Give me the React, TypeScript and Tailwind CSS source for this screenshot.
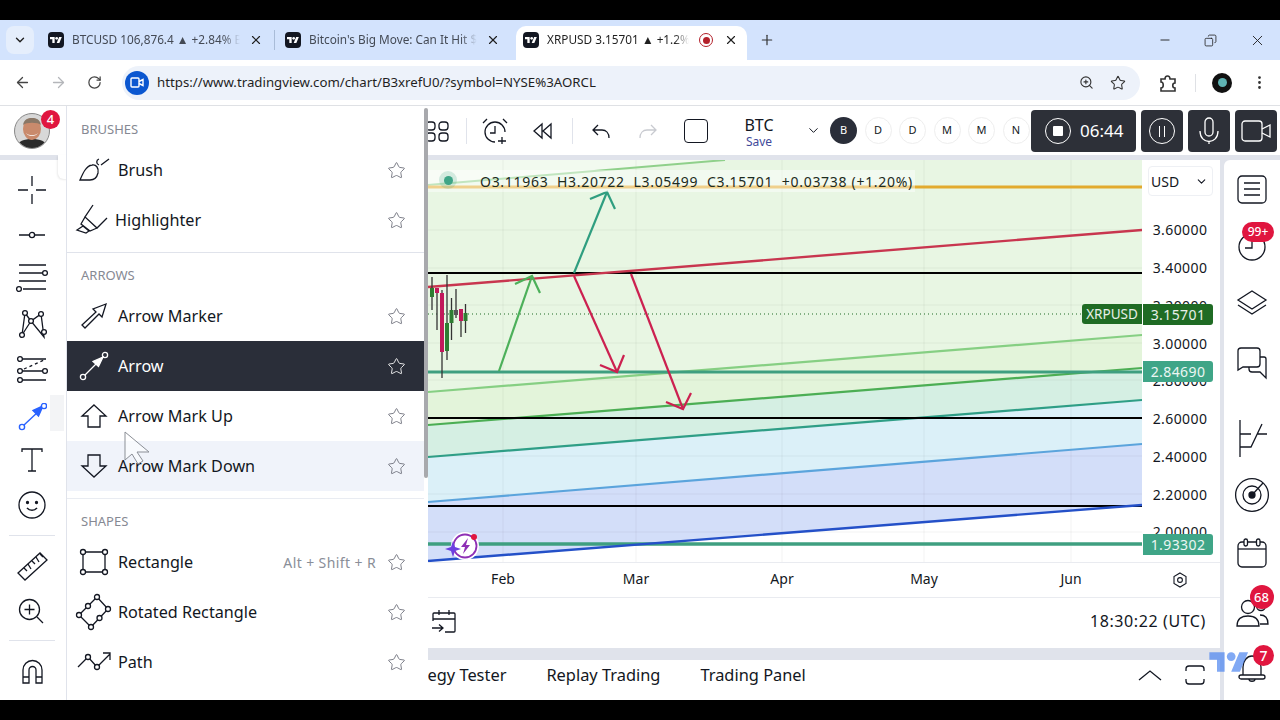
import { ArrowLeft, ArrowRight, ChevronDown, Copy, Minus, MoreVertical, Plus, RotateCw, Star, X, ZoomIn } from "lucide-react";
import type { ReactNode } from "react";

const INK = "#131722";

function TvMark({ color = "#fff" }: { color?: string }) {
  return (
    <svg viewBox="0 2 36 22" className="h-full w-full" fill={color}>
      <path d="M14 22H7V11H0V4h14v18zM28 22h-8l7.5-18h8L28 22z" />
      <circle cx="20" cy="8" r="4" />
    </svg>
  );
}

function Favicon() {
  return (
    <div className="flex size-4 shrink-0 items-center justify-center rounded-[4px] bg-[#131722] p-[2px]">
      <TvMark />
    </div>
  );
}

function Ico({ w, h, className, children }: { w: number; h: number; className?: string; children: ReactNode }) {
  return (
    <svg
      width={w}
      height={h}
      viewBox={`0 0 ${w} ${h}`}
      fill="none"
      stroke={INK}
      strokeWidth="1.3"
      className={className}
      style={{ overflow: "visible" }}
    >
      {children}
    </svg>
  );
}

function Badge({ children, className }: { children: ReactNode; className: string }) {
  return (
    <span
      className={`absolute flex items-center justify-center rounded-full bg-[#e0163f] text-[13px] font-medium leading-none text-white ${className}`}
    >
      {children}
    </span>
  );
}

/* left tools */
const leftTools: { h: number; mt: number; icon: ReactNode }[] = [
  {
    h: 28,
    mt: 16,
    icon: (
      <Ico w={28} h={28}>
        <path d="M14 0v10M14 18v10M0 14h10M18 14h10" />
      </Ico>
    ),
  },
  {
    h: 10,
    mt: 26,
    icon: (
      <Ico w={28} h={10}>
        <path d="M1 5h10M17 5h10" />
        <circle cx="14" cy="5" r="2.6" />
      </Ico>
    ),
  },
  {
    h: 28,
    mt: 24,
    icon: (
      <Ico w={32} h={28}>
        <path d="M3 1h27M3 9h23M3 17h27M7 25h23" />
        <circle cx="29" cy="9" r="2.4" />
        <circle cx="3" cy="25" r="2.4" />
      </Ico>
    ),
  },
  {
    h: 30,
    mt: 16,
    icon: (
      <Ico w={32} h={30}>
        <path d="M6 27L9 5l6 8 10-7 3 23-13-16z" />
        <circle cx="9" cy="5" r="2.4" fill="#fff" />
        <circle cx="25" cy="6" r="2.4" fill="#fff" />
        <circle cx="15" cy="13" r="2.4" fill="#fff" />
        <circle cx="6" cy="27" r="2.4" fill="#fff" />
        <circle cx="28" cy="24" r="2.4" fill="#fff" />
      </Ico>
    ),
  },
  {
    h: 26,
    mt: 19,
    icon: (
      <Ico w={32} h={26}>
        <path d="M7 2h23M7 14h19M7 23h23" />
        <path d="M8 12L28 3" strokeDasharray="3 3" />
        <circle cx="4" cy="2" r="2.4" />
        <circle cx="4" cy="14" r="2.4" />
        <circle cx="29" cy="14" r="2.4" />
        <circle cx="4" cy="23" r="2.4" />
      </Ico>
    ),
  },
];

function LeftToolbar() {
  return (
    <div className="flex w-[66px] shrink-0 flex-col items-center bg-white pr-[2px]">
      {leftTools.map((t, i) => (
        <div key={i} className="flex w-full justify-center" style={{ marginTop: t.mt, height: t.h }}>
          {t.icon}
        </div>
      ))}
      <div className="relative mt-[12px] flex h-[44px] w-full items-center justify-center">
        <div className="absolute right-0 top-0 h-[36px] w-[14px] bg-[#f3f4f6]" />
        <svg width="30" height="28" viewBox="0 0 30 28" fill="none" stroke="#2962ff" strokeWidth="1.4" className="relative">
          <path d="M7 22L22 8" />
          <path d="M26 3l-10 4.5 5.5 5.500z" fill="#2962ff" />
          <circle cx="5" cy="24" r="2.6" />
          <circle cx="27" cy="3" r="2.6" fill="#fff" />
        </svg>
      </div>
      <div className="mt-[8px] flex h-[26px] w-full justify-center">
        <Ico w={22} h={26}>
          <path d="M1 5V2h20v3M11 2v22M7 24h8" />
        </Ico>
      </div>
      <div className="mt-[18px] flex w-full justify-center">
        <Ico w={28} h={28}>
          <circle cx="14" cy="14" r="13" />
          <circle cx="9.5" cy="11.5" r="1" fill={INK} />
          <circle cx="18.5" cy="11.5" r="1" fill={INK} />
          <path d="M9 17c2.5 3 7.5 3 10 0" />
        </Ico>
      </div>
      <div className="mt-[16px] h-px w-[46px] bg-[#e0e3eb]" />
      <div className="mt-[14px] flex w-full justify-center">
        <Ico w={32} h={32}>
          <path d="M2 23L24 3l7 7-22 20z" />
          <path d="M8 18l3 3M12 14l3 5M16 11l3 3M20 7l3 5M24 4l3 3" />
        </Ico>
      </div>
      <div className="mt-[17px] flex w-full justify-center">
        <Ico w={26} h={26}>
          <circle cx="10.500" cy="10.500" r="10" />
          <path d="M10.500 5.500v10M5.500 10.500h10M18 18l6 6" />
        </Ico>
      </div>
      <div className="mt-[15px] h-px w-[46px] bg-[#e0e3eb]" />
      <div className="mt-[19px] flex w-full justify-center">
        <Ico w={21} h={24}>
          <path d="M1 23V10a9.500 9.500 0 0 1 19 0v13h-6V10a3.500 3.500 0 0 0-7 0v13z" />
          <path d="M1 17h6M14 17h6" />
        </Ico>
      </div>
    </div>
  );
}

/* menu */
const menuIcons: Record<string, ReactNode> = {
  Brush: (
    <>
      <path d="M4 27C7 20 10 13 16 12c4-1 7 3 6 8-1 4-4 7-8 7H4z" />
      <path d="M23 6c-3 1-3 5 0 6M25 12l8-6" />
    </>
  ),
  Highlighter: (
    <>
      <path d="M17 2L9 14l12 11 10-10" />
      <path d="M9 14l-4 7 9 7 7-3M1 27l6-4 6 5-3 2z" />
    </>
  ),
  "Arrow Marker": <path d="M6 26l14-13-3-3 13-5-4 13-3-3L9 29z" />,
  "Arrow Mark Up": <path d="M18 6l12 11h-6v11H12V17H6z" />,
  "Arrow Mark Down": <path d="M12 6h12v11h6L18 28 6 17h6z" />,
  Rectangle: (
    <>
      <path d="M7 7h22v20H7z" />
      <circle cx="7" cy="7" r="2.5" fill="#fff" />
      <circle cx="29" cy="7" r="2.5" fill="#fff" />
      <circle cx="7" cy="27" r="2.5" fill="#fff" />
      <circle cx="29" cy="27" r="2.5" fill="#fff" />
    </>
  ),
  "Rotated Rectangle": (
    <>
      <path d="M21 2l11 12-17 18L3 20z" />
      <circle cx="21" cy="2" r="2.5" fill="#fff" />
      <circle cx="32" cy="14" r="2.5" fill="#fff" />
      <circle cx="15" cy="32" r="2.5" fill="#fff" />
      <circle cx="3" cy="20" r="2.5" fill="#fff" />
      <circle cx="12" cy="11" r="2.5" fill="#fff" />
      <circle cx="23.5" cy="23" r="2.5" fill="#fff" />
    </>
  ),
  Path: (
    <>
      <path d="M2 22l10-10 9 10L34 9M27 8h7v7" />
      <circle cx="12" cy="12" r="2.5" fill="#fff" />
      <circle cx="21" cy="22" r="2.5" fill="#fff" />
    </>
  ),
};

function MenuItem({
  label,
  shortcut,
  active,
  hovered,
  textShift,
}: {
  label: string;
  shortcut?: string;
  active?: boolean;
  hovered?: boolean;
  textShift?: boolean;
}) {
  return (
    <div
      className={`flex h-[50px] w-[357px] items-center pr-[18px] ${
        active ? "bg-[#2a2e39] text-white" : hovered ? "bg-[#f0f3fa] text-[#131722]" : "text-[#131722]"
      }`}
    >
      <div className="flex w-[51px] shrink-0 justify-center">
        {active ? (
          <svg width="34" height="34" viewBox="0 0 34 34" fill="none" stroke="#fff" strokeWidth="1.3" style={{ overflow: "visible" }}>
            <path d="M9 26L24 11" />
            <path d="M27 8l-10 4.5 5.5 5z" fill="#fff" />
            <circle cx="7" cy="28" r="2.6" />
            <circle cx="29" cy="6" r="2.6" />
          </svg>
        ) : (
          <Ico w={34} h={34}>
            {menuIcons[label]}
          </Ico>
        )}
      </div>
      <span className={`text-[16.2px] leading-none ${textShift ? "-ml-[3px]" : ""}`}>{label}</span>
      <span className="ml-auto mr-[11px] text-[14px] tracking-[0.4px] text-[#8a8e98]">{shortcut}</span>
      <Star size={19} strokeWidth={1.1} color={active ? "#fff" : "#6a6d78"} />
    </div>
  );
}

function MenuHeader({ children }: { children: ReactNode }) {
  return <div className="flex h-[30px] items-center pl-[14px] text-[13px] text-[#868993]">{children}</div>;
}

function DrawingMenu() {
  return (
    <div className="absolute bottom-0 left-[66px] top-0 z-20 w-[362px] overflow-hidden border-l border-[#e0e3eb] bg-white">
      <div className="pt-[9px]">
        <MenuHeader>BRUSHES</MenuHeader>
        <MenuItem label="Brush" />
        <MenuItem label="Highlighter" textShift />
      </div>
      <div className="mt-[7px] h-px w-[357px] bg-[#e0e3eb]" />
      <div className="mt-[8px]">
        <MenuHeader>ARROWS</MenuHeader>
        <MenuItem label="Arrow Marker" />
        <MenuItem label="Arrow" active />
        <MenuItem label="Arrow Mark Up" />
        <MenuItem label="Arrow Mark Down" hovered />
      </div>
      <div className="mt-[7px] h-px w-[357px] bg-[#e9ecf2]" />
      <div className="mt-[8px]">
        <MenuHeader>SHAPES</MenuHeader>
        <MenuItem label="Rectangle" shortcut="Alt + Shift + R" />
        <MenuItem label="Rotated Rectangle" />
        <MenuItem label="Path" />
      </div>
      {/* scrollbar */}
      <div className="absolute right-0 top-[2px] h-[370px] w-[4px] rounded-full bg-[#a8a9ad]" />
    </div>
  );
}

/* chart */
function ArrowLine({ d, head, color }: { d: string; head: string; color: string }) {
  return (
    <g stroke={color} strokeWidth="2.2" fill="none">
      <path d={d} />
      <path d={head} />
    </g>
  );
}

const candles = [
  { x: 432, w: [277, 310], b: [288, 297], c: "#2e7d32" },
  { x: 437, w: [288, 330], b: [288, 293], c: "#c2185b" },
  { x: 442, w: [290, 378], b: [293, 352], c: "#c2185b" },
  { x: 447, w: [275, 360], b: [323, 351], c: "#2e7d32" },
  { x: 451.5, w: [298, 340], b: [310, 323], c: "#2e7d32" },
  { x: 456, w: [289, 318], b: [310, 315], c: "#555" },
  { x: 461, w: [310, 337], b: [309, 321], c: "#c2185b" },
  { x: 465.5, w: [304, 333], b: [313, 321], c: "#2e7d32" },
];

function ChartPane() {
  return (
    <div className="relative min-w-0 flex-1 overflow-hidden bg-white">
      <svg viewBox="66 160 1076 402" className="block h-[402px] w-[1076px]">
        <path d="M428 392L1142 335V160H428z" fill="#e8f6e3" />
        <path d="M428 185L725 160H428z" fill="#f2faef" />
        <path d="M428 392L1142 335V368L428 425z" fill="#e3f4da" />
        <path d="M428 425L1142 368V400L428 457z" fill="#d5efe3" />
        <path d="M428 457L1142 400V444L428 502z" fill="#dbf0f8" />
        <path d="M428 502L1142 444V505L428 561z" fill="#d3def9" />
        <g stroke="#000" strokeOpacity="0.05">
          {[503, 636, 782, 924, 1071].map((x) => (
            <path key={x} d={`M${x} 160V562`} />
          ))}
          {[230, 268, 305, 343, 380, 418, 456, 494, 532].map((y) => (
            <path key={y} d={`M428 ${y}H1142`} />
          ))}
        </g>
        <path d="M428 185L725 160" stroke="#8fd08a" strokeWidth="2" />
        <path d="M428 392L1142 335" stroke="#86cf83" strokeWidth="2.2" />
        <path d="M428 425L1142 368" stroke="#4cae54" strokeWidth="2.2" />
        <path d="M428 457L1142 400" stroke="#2f9e86" strokeWidth="2.2" />
        <path d="M428 502L1142 444" stroke="#5ba4dc" strokeWidth="2.2" />
        <path d="M428 187H1142" stroke="#e2aa2e" strokeWidth="3" />
        <path d="M428 273H1142" stroke="#000" strokeWidth="2" />
        <path d="M428 314H1142" stroke="#1f6b24" strokeDasharray="1 3" />
        <path d="M428 372H1142" stroke="#3f9f80" strokeWidth="3" />
        <path d="M428 418H1142" stroke="#000" strokeWidth="2" />
        <path d="M428 506H1142" stroke="#000" strokeWidth="2" />
        <path d="M428 544H1142" stroke="#3f9f80" strokeWidth="3.5" />
        <path d="M428 561L1142 505" stroke="#2450c8" strokeWidth="2.4" />
        <path d="M428 287L1142 230" stroke="#c8364f" strokeWidth="2.4" />
        {candles.map((c) => (
          <g key={c.x}>
            <path d={`M${c.x} ${c.w[0]}V${c.w[1]}`} stroke="#333" strokeWidth="1.3" />
            <rect x={c.x - 2} y={c.b[0]} width="4" height={c.b[1] - c.b[0]} fill={c.c} />
          </g>
        ))}
        <ArrowLine d="M499 371L532 276" head="M515 284L532 276L540 293" color="#4cb05a" />
        <ArrowLine d="M574 273L607 192" head="M590 199L607 192L615 209" color="#2f9e80" />
        <ArrowLine d="M574 276L617 372" head="M600 365L617 372L624 355" color="#cc2150" />
        <ArrowLine d="M631 274L683 409" head="M666 402L683 409L691 393" color="#cc2150" />
        {/* lightning badge */}
        <circle cx="465" cy="546" r="14" fill="#fff" />
        <circle cx="465" cy="546" r="11.5" fill="none" stroke="#8e2fb5" strokeWidth="1.8" />
        <path d="M468 538l-7 9h4l-2 7 7-9h-4z" fill="#8e2fb5" />
        <circle cx="474" cy="537" r="3" fill="#e0163f" />
        <path d="M453 541l2 6 6 2-6 2-2 6-2-6-6-2 6-2z" fill="#6d3fe0" />
      </svg>
      <div className="absolute left-[362px] top-[10px] flex h-[22px] w-[487px] items-center whitespace-nowrap bg-white/45 pl-[52px] text-[14px] tracking-[0.7px] text-[#1d2b20]">
        O3.11963 &nbsp;H3.20722 &nbsp;L3.05499 &nbsp;C3.15701 &nbsp;+0.03738 (+1.20%)
      </div>
      {/* legend status dot sits above the legend's wash */}
      <span className="absolute left-[373px] top-[11px] flex size-[18px] items-center justify-center rounded-full bg-[#3fa587]/20">
        <span className="size-[9px] rounded-full bg-[#3fa587]" />
      </span>
      <div className="absolute right-0 top-[144px] flex h-[20px] w-[60px] items-center justify-center rounded-l-[3px] bg-[#1f6b24] text-[13.5px] text-white/90">
        XRPUSD
      </div>
    </div>
  );
}

const prices = ["3.60000", "3.40000", "3.20000", "3.00000", "2.80000", "2.60000", "2.40000", "2.20000", "2.00000"];

function PriceTag({ top, bg, children }: { top: string; bg: string; children: ReactNode }) {
  return (
    <div
      className={`absolute left-px flex h-[21px] w-[70px] items-center justify-center rounded-r-[3px] text-[14px] tracking-[0.4px] text-white/90 ${top} ${bg}`}
    >
      {children}
    </div>
  );
}

function PriceScale() {
  return (
    <div className="relative h-[402px] w-[78px] shrink-0 bg-white">
      <div className="absolute left-[6px] top-[6px] flex h-[30px] w-[65px] items-center justify-between rounded border border-[#eef0f4] pl-[2px] pr-[4px] text-[14px] text-[#131722]">
        USD <ChevronDown size={13} strokeWidth={2} />
      </div>
      <div className="flex flex-col pr-[2px] pt-[51px]">
        {prices.map((p) => (
          <div key={p} className="flex h-[37.75px] items-center justify-center text-[14px] tracking-[0.4px] text-[#131722]">
            {p}
          </div>
        ))}
      </div>
      <PriceTag top="top-[144px]" bg="bg-[#1f6b24]">
        3.15701
      </PriceTag>
      <PriceTag top="top-[201px]" bg="bg-[#3fa587]">
        2.84690
      </PriceTag>
      <PriceTag top="top-[374px]" bg="bg-[#3fa587]">
        1.93302
      </PriceTag>
    </div>
  );
}

const months = [
  { label: "Feb", left: "left-[437px]" },
  { label: "Mar", left: "left-[570px]" },
  { label: "Apr", left: "left-[716px]" },
  { label: "May", left: "left-[858px]" },
  { label: "Jun", left: "left-[1005px]" },
];

function TopToolbar() {
  return (
    <div className="relative flex h-[49px] items-center bg-white">
      <div className="flex h-full w-[66px] shrink-0 items-center justify-center pr-[2px]">
        <div className="relative size-[36px]">
          <svg viewBox="0 0 36 36" className="size-[36px]">
            <clipPath id="face">
              <circle cx="18" cy="18" r="17" />
            </clipPath>
            <circle cx="18" cy="18" r="17.5" fill="#d8d8d8" stroke="#888" />
            <g clipPath="url(#face)">
              <path d="M2 36c1-8 8-10 16-10s15 2 16 10z" fill="#2a2a2a" />
              <ellipse cx="18" cy="16" rx="9" ry="11" fill="#c98a6c" />
              <path d="M9 12c1-6 5-7 9-7s8 1 9 7c-3-3-15-3-18 0z" fill="#8a7766" />
              <path d="M12 20c3 3 9 3 12 0-2 4-10 4-12 0z" fill="#fff" />
            </g>
          </svg>
          <Badge className="-right-[10px] -top-[3px] size-[19px]">4</Badge>
        </div>
      </div>
      <div className="ml-[350px] flex w-[42px] justify-center">
        <Ico w={24} h={20}>
          <rect x="1" y="1" width="9" height="8" rx="3" />
          <rect x="14" y="1" width="9" height="8" rx="3" />
          <rect x="1" y="12" width="9" height="8" rx="3" />
          <rect x="14" y="12" width="9" height="8" rx="3" />
        </Ico>
      </div>
      <div className="ml-[8px] h-[26px] w-px bg-[#e0e3eb]" />
      <div className="ml-[7px] flex w-[42px] justify-center">
        <Ico w={26} h={26}>
          <path d="M13 24a10 10 0 1 1 10-10" />
          <path d="M13 8v7H8M1 5l4-4M25 5l-4-4M20 19v7M16 23h8" />
        </Ico>
      </div>
      <div className="ml-[6px] flex w-[42px] justify-center">
        <Ico w={20} h={16}>
          <path d="M9 1L1 8l8 7zM18 1l-8 7 8 7z" />
        </Ico>
      </div>
      <div className="ml-[8px] h-[26px] w-px bg-[#e0e3eb]" />
      <div className="ml-[7px] flex w-[42px] justify-center">
        <Ico w={18} h={14}>
          <path d="M6 1L1 6l5 5M1 6h9c4 0 7 3 7 8" />
        </Ico>
      </div>
      <div className="ml-[5px] flex w-[42px] justify-center">
        <svg width="18" height="14" viewBox="0 0 18 14" fill="none" stroke="#c8cad0" strokeWidth="1.3">
          <path d="M12 1l5 5-5 5M17 6H8c-4 0-7 3-7 8" />
        </svg>
      </div>
      <div className="ml-[6px] flex w-[42px] justify-center">
        <div className="size-[24px] rounded-[4px] border border-[#131722]" />
      </div>
      <div className="ml-[11px] flex w-[62px] flex-col items-center pt-[3px] leading-none">
        <span className="text-[16px] text-[#131722]">BTC</span>
        <span className="mt-[3px] text-[12px] text-[#3f4a9a]">Save</span>
      </div>
      <ChevronDown size={15} strokeWidth={1.6} color={INK} className="ml-[16px]" />
      <div className="ml-[9px] flex gap-[7.5px] text-[11px] text-[#131722]">
        <span className="flex size-[27px] items-center justify-center rounded-full bg-[#2a2e39] text-white">B</span>
        {["D", "D", "M", "M", "N"].map((l, i) => (
          <span key={i} className="flex size-[27px] items-center justify-center rounded-full border border-[#eeeeee]">
            {l}
          </span>
        ))}
      </div>
      <div className="absolute right-[3px] top-[4px] z-30 flex h-[42px] gap-[5px] bg-transparent">
        <div className="flex w-[105px] items-center gap-[9px] rounded-[4px] bg-[#2d3038] pl-[14px] text-[17px] text-white">
          <span className="flex size-[26px] items-center justify-center rounded-full border-[1.5px] border-white">
            <span className="size-[10px] rounded-[1px] bg-white" />
          </span>
          06:44
        </div>
        <div className="flex w-[42px] items-center justify-center rounded-[4px] bg-[#2d3038]">
          <span className="flex size-[26px] items-center justify-center gap-[4px] rounded-full border-[1.5px] border-white">
            <span className="h-[11px] w-px bg-white" />
            <span className="h-[11px] w-px bg-white" />
          </span>
        </div>
        <div className="flex w-[42px] items-center justify-center rounded-[4px] bg-[#2d3038]">
          <svg width="20" height="28" viewBox="0 0 20 28" fill="none" stroke="#fff" strokeWidth="1.3">
            <rect x="6" y="1" width="8" height="18" rx="4" />
            <path d="M1 14c0 14 18 14 18 0M10 24v3" />
          </svg>
        </div>
        <div className="flex w-[42px] items-center justify-center rounded-[4px] bg-[#2d3038]">
          <svg width="30" height="24" viewBox="0 0 30 24" fill="none" stroke="#fff" strokeWidth="1.3">
            <rect x="1" y="2" width="20" height="20" rx="3" />
            <path d="M21 10l8-4v12l-8-4" />
          </svg>
        </div>
      </div>
    </div>
  );
}

function RightSidebar() {
  return (
    <div className="flex w-[56px] shrink-0 flex-col items-center rounded-tl-[6px] bg-white">
      <div className="mt-[15px] flex h-[28px] items-center">
        <Ico w={30} h={28}>
          <rect x="1" y="1" width="28" height="27" rx="4" />
          <path d="M7 8h16M7 14h16M7 20h16" />
        </Ico>
      </div>
      <div className="relative mt-[28px] flex h-[30px] items-center">
        <Ico w={30} h={30}>
          <circle cx="15" cy="16" r="13" />
          <path d="M15 9v8H8" />
        </Ico>
        <Badge className="-right-[7px] -top-[9px] h-[20px] w-[32px] !text-[12px]">99+</Badge>
      </div>
      <div className="mt-[29px] flex h-[26px] items-center">
        <Ico w={30} h={26}>
          <path d="M15 1l14 9-14 9-14-9z" />
          <path d="M1 15l14 9 14-9" />
        </Ico>
      </div>
      <div className="mt-[31px] flex h-[32px] items-center">
        <Ico w={30} h={32}>
          <path d="M1 23V4a3 3 0 0 1 3-3h16a3 3 0 0 1 3 3v13a3 3 0 0 1-3 3H6z" />
          <path d="M23 10h4a2 2 0 0 1 2 2v19l-6-6H15a3 3 0 0 1-3-3v-2" />
        </Ico>
      </div>
      <div className="mt-[40px] flex h-[38px] items-center">
        <Ico w={30} h={38}>
          <path d="M3 1v37M3 15h11M20 15h10M3 28h11L25 5" />
        </Ico>
      </div>
      <div className="mt-[21px] flex h-[34px] items-center">
        <Ico w={34} h={34}>
          <circle cx="17" cy="17" r="16.4" />
          <circle cx="17" cy="17" r="9" />
          <circle cx="17" cy="17" r="3" fill={INK} />
          <path d="M17 17L28 5" />
        </Ico>
      </div>
      <div className="mt-[26px] flex h-[30px] items-center">
        <Ico w={30} h={30}>
          <rect x="1" y="4" width="28" height="25" rx="4" />
          <path d="M1 11h28" />
          <rect x="7" y="1" width="3.5" height="7" rx="1.7" fill="#fff" />
          <rect x="19.5" y="1" width="3.5" height="7" rx="1.7" fill="#fff" />
        </Ico>
      </div>
      <div className="relative mt-[27px] flex h-[32px] items-center">
        <Ico w={33} h={32}>
          <circle cx="12" cy="12" r="6.5" />
          <circle cx="25" cy="11" r="4.5" />
          <path d="M1 31c0-8 5-10 11-10s11 2 11 10zM24 20c5 0 8 2 8 9h-8" />
        </Ico>
        <Badge className="-right-[5px] -top-[10px] size-[24px]">68</Badge>
      </div>
      <div className="relative mt-[26px] flex h-[30px] items-center">
        <Ico w={28} h={30}>
          <path d="M5 22V14C5 8 9 3 14 3s9 5 9 11v8" />
          <rect x="1" y="22" width="26" height="4" rx="2" />
          <path d="M11 26c0 3 6 3 6 0" />
        </Ico>
        <Badge className="-right-[8px] -top-[8px] size-[21px] !text-[14px]">7</Badge>
      </div>
    </div>
  );
}

export default function App() {
  return (
    <div className="relative flex h-[720px] w-[1280px] flex-col overflow-hidden bg-black font-['Noto_Sans','Liberation_Sans',sans-serif]">
      <div className="h-[20px] shrink-0 bg-black" />

      {/* tab strip */}
      <div className="flex h-[40px] shrink-0 items-center bg-[#d3e3fd] text-[11.8px] text-[#444a55]">
        <div className="ml-[6px] flex h-[28px] w-[28px] items-center justify-center rounded-[8px] bg-[#e5eefc]">
          <ChevronDown size={14} strokeWidth={2.4} color="#1f1f1f" />
        </div>
        <div className="ml-[14px] flex w-[226px] items-center">
          <Favicon />
          <span className="ml-[8px] w-[168px] overflow-hidden whitespace-nowrap [mask-image:linear-gradient(to_right,black_90%,transparent)]">
            BTCUSD 106,876.4 ▲ +2.84% B
          </span>
          <X size={14} strokeWidth={2} color="#1f1f1f" className="ml-[9px]" />
        </div>
        <div className="h-[20px] w-px bg-[#a9bcd8]" />
        <div className="ml-[10px] flex w-[222px] items-center">
          <Favicon />
          <span className="ml-[8px] w-[168px] overflow-hidden whitespace-nowrap [mask-image:linear-gradient(to_right,black_90%,transparent)]">
            Bitcoin's Big Move: Can It Hit $1
          </span>
          <X size={14} strokeWidth={2} color="#1f1f1f" className="ml-[9px]" />
        </div>
        <div className="ml-[9px] flex h-[34px] w-[231px] items-center self-end rounded-t-[10px] bg-white pb-[6px] pl-[7px]">
          <Favicon />
          <span className="ml-[8px] w-[142px] overflow-hidden whitespace-nowrap text-[#1f1f1f] [mask-image:linear-gradient(to_right,black_90%,transparent)]">
            XRPUSD 3.15701 ▲ +1.2% E
          </span>
          <span className="ml-[10px] flex size-[14px] items-center justify-center rounded-full border-[1.5px] border-[#b3202a]">
            <span className="size-[7px] rounded-full bg-[#b3202a]" />
          </span>
          <X size={14} strokeWidth={2} color="#1f1f1f" className="ml-[11px]" />
        </div>
        <Plus size={16} strokeWidth={1.8} color="#333" className="ml-[12px]" />
        <Minus size={14} strokeWidth={1.6} color="#222" className="ml-[383px]" />
        <Copy size={13} strokeWidth={1.5} color="#222" className="ml-[32px] -scale-x-100" />
        <X size={17} strokeWidth={1.3} color="#222" className="ml-[32px]" />
      </div>

      {/* address bar */}
      <div className="flex h-[46px] shrink-0 items-center border-b border-[#dfe1e5] bg-white">
        <ArrowLeft size={17} strokeWidth={1.8} color="#444" className="ml-[14px]" />
        <ArrowRight size={17} strokeWidth={1.8} color="#b4b6ba" className="ml-[19px]" />
        <RotateCw size={15} strokeWidth={2} color="#444" className="ml-[20px]" />
        <div className="ml-[20px] flex h-[34px] w-[1018px] items-center rounded-full bg-[#edf2fa] pl-[3px]">
          <span className="flex size-[24px] items-center justify-center rounded-full bg-[#0b57d0]">
            <svg width="14" height="11" viewBox="0 0 14 11" fill="none" stroke="#fff" strokeWidth="1.4">
              <rect x="1" y="1" width="8" height="9" rx="1" />
              <path d="M9 4.5l4-2v6l-4-2" />
            </svg>
          </span>
          <span className="ml-[8px] mt-[1px] text-[13.25px] text-[#1f1f1f]">https://www.tradingview.com/chart/B3xrefU0/?symbol=NYSE%3AORCL</span>
          <ZoomIn size={15} strokeWidth={1.8} color="#333" className="ml-auto" />
          <Star size={16} strokeWidth={1.6} color="#333" className="ml-[16px] mr-[14px]" />
        </div>
        <svg width="18" height="18" viewBox="0 0 18 18" fill="none" stroke="#333" strokeWidth="1.6" className="ml-[19px]">
          <path d="M2 5h4c0-4 5-4 5 0h5v4c-3 0-3 5 0 5v3H2v-3c3 0 3-6 0-6z" />
        </svg>
        <div className="ml-[18px] h-[18px] w-px bg-[#dfe1e5]" />
        <span className="ml-[16px] flex size-[20px] items-center justify-center rounded-full bg-[#111]">
          <span className="size-[9px] rounded-full bg-[#5fb3b3]" />
        </span>
        <MoreVertical size={17} strokeWidth={2} color="#333" className="ml-[19px]" />
      </div>

      {/* page */}
      <div className="relative flex h-[594px] shrink-0 flex-col bg-[#e0e3eb]">
        <TopToolbar />
        <div className="mt-[5px] flex min-h-0 flex-1">
          <LeftToolbar />
          <div className="flex w-[1154px] shrink-0 flex-col">
            <div className="flex h-[402px] shrink-0">
              <ChartPane />
              <PriceScale />
            </div>
            <div className="relative h-[35px] shrink-0 border-t border-[#e9ebf0] bg-white text-[14px] text-[#131722]">
              {months.map((m) => (
                <span key={m.label} className={`absolute top-[5px] -translate-x-1/2 ${m.left}`}>
                  {m.label}
                </span>
              ))}
              <svg width="18" height="18" viewBox="0 0 18 18" fill="none" stroke={INK} strokeWidth="1.1" className="absolute left-[1105px] top-[8px]">
                <path d="M9 2l6 3.5v7L9 16l-6-3.5v-7z" />
                <circle cx="9" cy="9" r="2.4" />
              </svg>
            </div>
            <div className="flex h-[51px] shrink-0 items-center border-t border-[#e9ebf0] bg-white pb-[4px] pr-[14px]">
              <div className="ml-[366px]">
                <Ico w={24} h={24}>
                  <path d="M1 12V5a1 1 0 0 1 1-1h20a1 1 0 0 1 1 1v17a1 1 0 0 1-1 1H13M1 10h22M7 1v5M17 1v5M0 19h10M7 15.500l4 3.500-4 3.500" />
                </Ico>
              </div>
              <span className="ml-auto text-[16px] tracking-[0.6px] text-[#131722]">18:30:22 (UTC)</span>
            </div>
            <div className="h-[12px] shrink-0" />
            <div className="flex h-[40px] shrink-0 items-center bg-white pb-[10px] text-[16.4px] text-[#131722]">
              <span className="ml-[325px]">Strategy Tester</span>
              <span className="ml-[40px]">Replay Trading</span>
              <span className="ml-[40px]">Trading Panel</span>
              <svg width="24" height="12" viewBox="0 0 24 12" fill="none" stroke={INK} strokeWidth="1.3" className="ml-[332px]">
                <path d="M1 11L12 2l11 9" />
              </svg>
              <svg width="20" height="20" viewBox="0 0 20 20" fill="none" stroke={INK} strokeWidth="1.3" className="ml-[23px]">
                <path d="M1 6V4a3 3 0 0 1 3-3h12a3 3 0 0 1 3 3v2M1 14v2a3 3 0 0 0 3 3h12a3 3 0 0 0 3-3v-2" />
              </svg>
            </div>
          </div>
          <div className="w-[4px] shrink-0" />
          <RightSidebar />
        </div>
        <DrawingMenu />
        {/* popover sliver beside the menu */}
        <div className="absolute left-[58px] top-[49px] z-10 h-[24px] w-[10px] rounded-bl-[6px] bg-white shadow-[-1px_1px_2px_rgba(0,0,0,0.08)]" />
        {/* watermark */}
        <div className="pointer-events-none absolute left-[1207px] top-[544px] z-30 h-[24px] w-[44px] opacity-70">
          <TvMark color="#4c85f0" />
        </div>
        {/* mouse pointer */}
        <svg width="30" height="38" viewBox="0 0 30 38" className="pointer-events-none absolute left-[122px] top-[324px] z-40" fill="#ffffff" fillOpacity="0.55" stroke="#8b8f96" strokeWidth="1">
          <path d="M3 2v28l7-6 6 10 5-3-6-9h12z" />
        </svg>
      </div>
      <div className="h-[20px] shrink-0 bg-black" />
    </div>
  );
}
